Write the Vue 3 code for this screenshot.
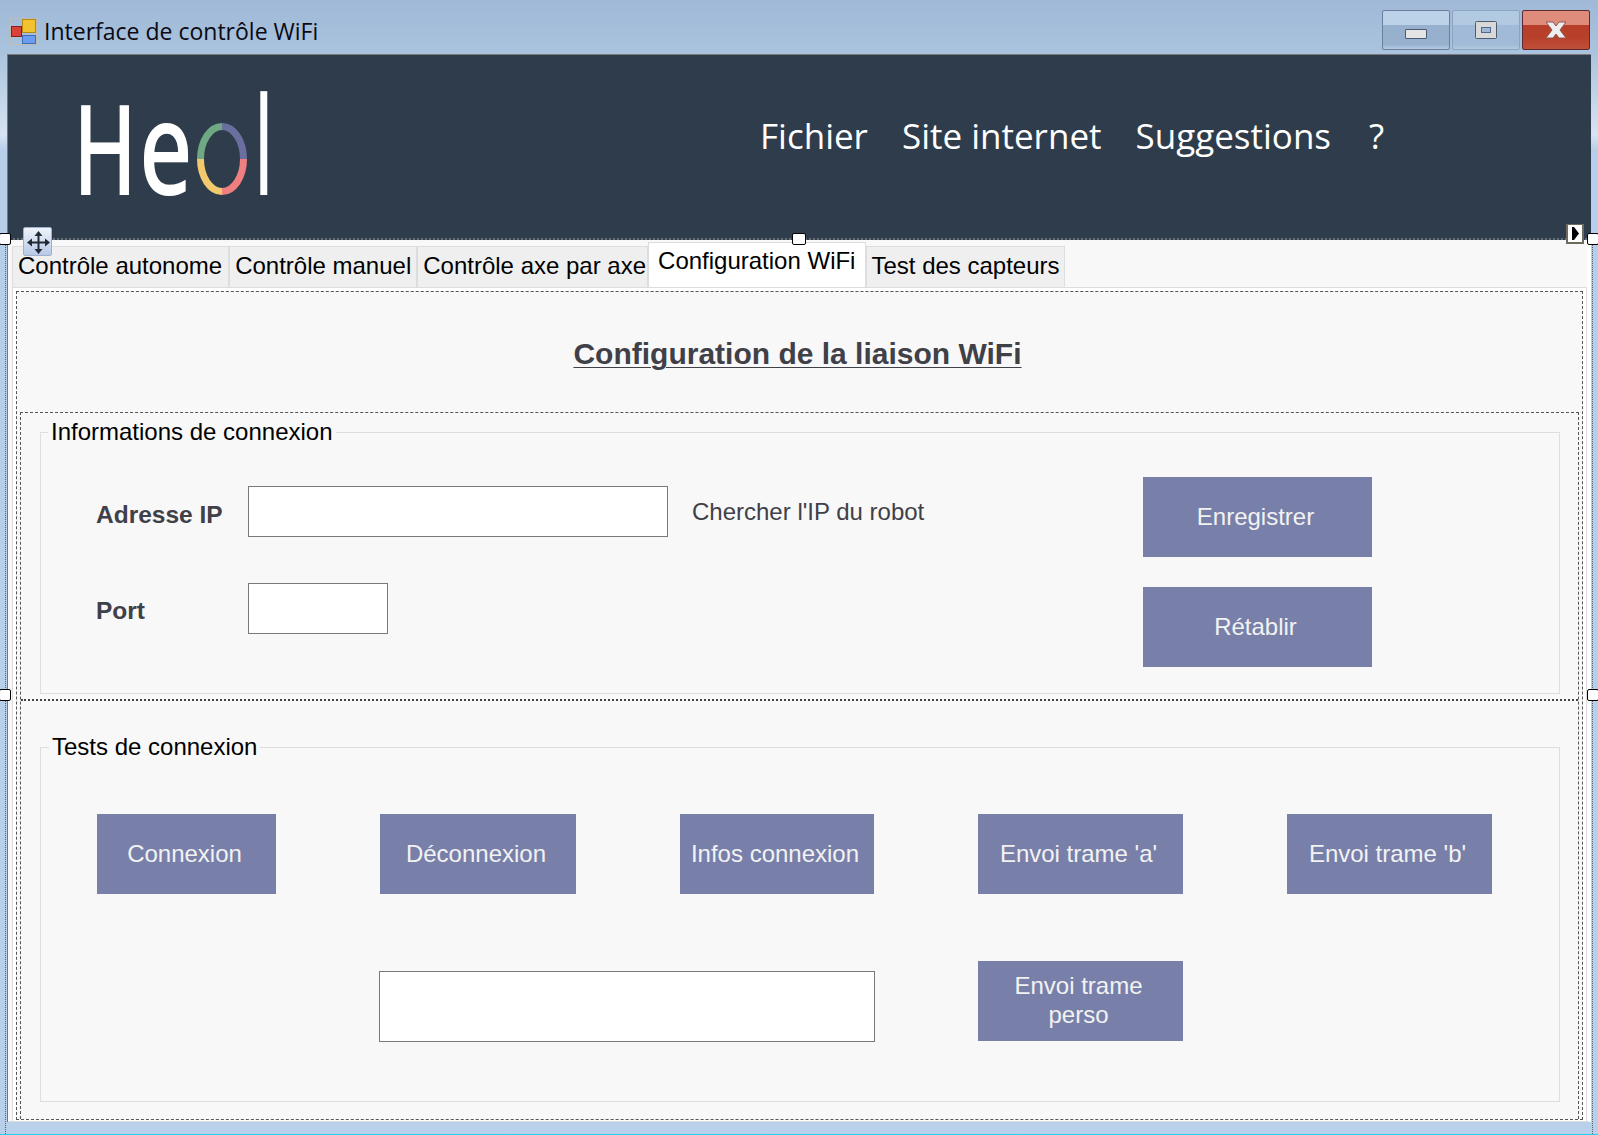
<template>
  <div class="window">
    <div class="titlebar">
      <svg class="app-icon" width="27" height="27" viewBox="0 0 27 27">
        <rect x="0.5" y="0.5" width="26" height="26" fill="none" stroke="#bdbdb5" />
        <rect x="1.5" y="8.5" width="10" height="10" fill="#d8403a" stroke="#8c1f1a" />
        <rect x="12.5" y="1.5" width="13" height="13" fill="#f3c230" stroke="#b58a10" />
        <rect x="12.5" y="17.5" width="13" height="8" fill="#6a9cf0" stroke="#3f6cb5" />
      </svg>
      <span class="window-title">Interface de contrôle WiFi</span>
      <div class="window-buttons">
        <div class="wbtn">
          <span class="min-glyph"></span>
        </div>
        <div class="wbtn wbtn-max">
          <svg width="22" height="18" viewBox="0 0 22 18">
            <rect x="0.5" y="0.5" width="21" height="17" rx="1" fill="#d8d8d8" stroke="#4f5b70" />
            <rect x="6.5" y="6.5" width="9" height="5" fill="#9fb7d5" stroke="#4f6a90" />
          </svg>
        </div>
        <div class="wbtn wbtn-close">
          <svg width="24" height="20" viewBox="0 0 24 20">
            <path d="M2 2h7l3 4 3-4h7l-6 8 6 8h-7l-3-4-3 4H2l6-8z" fill="#eeeeee" stroke="#8a5a55" stroke-width="1" />
          </svg>
        </div>
      </div>
    </div>

    <div class="frame">
      <header class="banner">
        <div class="logo">
          <span class="logo-letter letter-h">H</span>
          <span class="logo-letter letter-e">e</span>
          <svg class="logo-ring" width="50" height="72" viewBox="0 0 50 72" fill="none" stroke-width="7">
            <path d="M25 3.5A21.5 32.5 0 0 0 3.500 36" stroke="#6fa983" />
            <path d="M25 3.500A21.5 32.5 0 0 1 46.500 36" stroke="#6a6f9f" />
            <path d="M46.500 36A21.5 32.5 0 0 1 25 68.500" stroke="#f08080" />
            <path d="M25 68.500A21.5 32.5 0 0 1 3.500 36" stroke="#f2c96d" />
          </svg>
          <span class="logo-letter letter-l">l</span>
        </div>
        <nav class="menu">
          <span v-for="item in menu" :key="item">{{ item }}</span>
        </nav>
      </header>

      <div class="tabcontrol">
        <div class="tabs">
          <div
            v-for="tab in tabs"
            :key="tab"
            class="tab"
            :class="{ active: tab === activeTab }"
          >{{ tab }}</div>
        </div>

        <div class="tabpage">
          <div class="outer">
            <div class="title-panel">
              <h1>Configuration de la liaison WiFi</h1>
            </div>

            <div class="split">
              <div class="split-top">
                <fieldset class="group group-info">
                  <legend>Informations de connexion</legend>
                  <div class="conn-form">
                    <div class="fields">
                      <div class="field">
                        <label>Adresse IP</label>
                        <input class="input-ip" type="text" />
                        <span class="find-ip">Chercher l'IP du robot</span>
                      </div>
                      <div class="field">
                        <label>Port</label>
                        <input class="input-port" type="text" />
                      </div>
                    </div>
                    <div class="actions">
                      <button class="btn btn-wide">Enregistrer</button>
                      <button class="btn btn-wide">Rétablir</button>
                    </div>
                  </div>
                </fieldset>
              </div>

              <div class="split-bottom">
                <fieldset class="group group-tests">
                  <legend>Tests de connexion</legend>
                  <div class="test-row">
                    <button v-for="b in testButtons" :key="b.label" class="btn" :class="b.cls">{{ b.label }}</button>
                  </div>
                  <div class="custom-row">
                    <input class="input-frame" type="text" />
                    <button class="btn btn-frame">Envoi trame perso</button>
                  </div>
                </fieldset>
              </div>
            </div>
          </div>
        </div>
      </div>
    </div>

    <!-- designer overlays -->
    <div class="selection"></div>
    <span class="handle h-left"></span>
    <span class="handle h-mid"></span>
    <span class="handle h-right"></span>
    <span class="handle h-left2"></span>
    <span class="handle h-right2"></span>
    <div class="move-glyph">
      <svg width="29" height="29" viewBox="0 0 29 29">
        <path d="M14.500 3l4 5h-3v5.500h5.500v-3l5 4-5 4v-3h-5.500v5.500h3l-4 5-4-5h3v-5.500h-5.500v3l-5-4 5-4v3h5.500v-5.500h-3z" fill="#222a35" />
      </svg>
    </div>
    <div class="smart-tag">
      <svg width="9" height="13" viewBox="0 0 9 13"><path d="M1 0h2l5 6.500-5 6.500h-2z" fill="#000" /></svg>
    </div>
  </div>
</template>

<script setup>
import { ref } from 'vue';

const menu = ['Fichier', 'Site internet', 'Suggestions', '?'];
const tabs = ['Contrôle autonome', 'Contrôle manuel', 'Contrôle axe par axe', 'Configuration WiFi', 'Test des capteurs'];
const activeTab = ref('Configuration WiFi');

const testButtons = [
  { label: 'Connexion', cls: 'btn-connect' },
  { label: 'Déconnexion', cls: 'btn-disconnect' },
  { label: 'Infos connexion', cls: 'btn-infos' },
  { label: "Envoi trame 'a'", cls: 'btn-frame' },
  { label: "Envoi trame 'b'", cls: 'btn-frame' },
];
</script>

<style>
html,
body {
  margin: 0;
  background: #b8d0ea;
}
</style>

<style scoped>
.window {
  position: relative;
  width: 1598px;
  height: 1135px;
  overflow: hidden;
  box-sizing: border-box;
  border-bottom: 1px solid #1fd4ee;
  font-family: "Liberation Sans", Arial, sans-serif;
  background: linear-gradient(180deg, #9fb9d7 0, #a9c2dd 50px, #d6e4f2 135px, #b6cee9 150px, #b8d0ea 100%);
}

.titlebar {
  display: flex;
  align-items: center;
  height: 54px;
  padding: 2px 8px 0 10px;
  box-sizing: border-box;
}

.app-icon {
  margin-top: 6px;
}

.window-title {
  margin-left: 7px;
  font-family: "Open Sans", sans-serif;
  font-size: 23px;
  color: #0a0a14;
  margin-top: 6px;
}

.window-buttons {
  display: flex;
  gap: 2px;
  margin-left: auto;
  align-self: flex-start;
  margin-top: 8px;
}

.wbtn {
  display: flex;
  align-items: center;
  justify-content: center;
  width: 68px;
  height: 40px;
  box-sizing: border-box;
  border: 1px solid #6d7f9c;
  border-radius: 2px;
  background: linear-gradient(180deg, #bcd2e8 0, #bcd2e8 38%, #97b0ce 38%, #97b0ce 88%, #b4cbe2 100%);
}

.wbtn-max {
  border-color: #8ea3c0;
  background: linear-gradient(180deg, #b2c9e2 0, #b2c9e2 38%, #a1bad7 38%, #a1bad7 88%, #b2c9e2 100%);
}

.wbtn-close {
  border-color: #5c2a30;
  background: linear-gradient(180deg, #e08c7c 0, #e08c7c 38%, #b8402a 38%, #b8402a 70%, #c04f38 100%);
}

.min-glyph {
  display: block;
  width: 22px;
  height: 10px;
  margin-top: 8px;
  background: #e4e4e4;
  border: 1px solid #4a5a75;
  border-radius: 1px;
  box-sizing: border-box;
}

.frame {
  display: flex;
  flex-direction: column;
  margin: 0 7px 0 7px;
  height: 1068px;
  border-left: 1px solid #777;
  box-sizing: border-box;
}

.banner {
  display: flex;
  align-items: center;
  height: 186px;
  flex: none;
  background: #2f3c4b;
  border-top: 1px solid #7a7a7a;
  border-bottom: 2px dotted #6a7078;
  box-sizing: border-box;
}

.logo {
  display: flex;
  align-items: flex-end;
  width: 752px;
  height: 106px;
  padding-left: 71px;
  margin-top: -3px;
  box-sizing: border-box;
}

.logo-letter {
  display: block;
  font-family: "Noto Sans", sans-serif;
  font-size: 130px;
  font-weight: 500;
  line-height: 106px;
  color: #fff;
  transform-origin: left bottom;
  height: 106px;
}

.letter-h {
  width: 66px;
  margin-left: -6px;
  transform: scale(0.66, 0.97);
}

.letter-e {
  width: 58px;
  transform: scaleX(0.72);
}

.logo-ring {
  flex: none;
  margin: 0 8px 3px 0;
}

.letter-l {
  width: 10px;
  transform: scale(0.5, 1.05);
}

.menu {
  display: flex;
  gap: 34px;
  margin-top: -22px;
  font-family: "Open Sans", sans-serif;
  font-weight: 400;
  font-size: 35px;
  color: #fff;
}

.menu span:last-child {
  margin-left: 4px;
}

.tabcontrol {
  flex: 1;
  display: flex;
  flex-direction: column;
  background: #f8f8f8;
  border-right: 4px solid #fff;
  border-bottom: 1px solid #ddd;
}

.tabs {
  display: flex;
  align-items: flex-end;
  height: 47px;
  padding-left: 4px;
  flex: none;
}

.tab {
  height: 41px;
  box-sizing: border-box;
  padding: 0 1px 3px 5px;
  display: flex;
  align-items: center;
  justify-content: center;
  font-size: 24px;
  color: #000;
  background: #efefef;
  border: 1px solid #ddd;
  border-bottom: 0;
}

.tab:last-child {
  padding: 0 4px 3px;
}

.tab:nth-child(1) {
  padding: 0 6px 3px 5px;
}

.tab:nth-child(2) {
  padding: 0 5px 3px;
}

.tab.active {
  height: 45px;
  padding: 0 10px 8px 9px;
  background: #fff;
}

.tabpage {
  flex: 1;
  background: #fff;
  border: 1px solid #ddd;
  border-bottom: 0;
  margin-left: 4px;
  padding: 3px 3px 1px 3px;
  min-height: 0;
  display: flex;
}

.outer {
  flex: 1;
  display: flex;
  flex-direction: column;
  border: 1px dashed #555;
  background: #f8f8f8;
}

.title-panel {
  display: flex;
  align-items: center;
  justify-content: center;
  height: 120px;
  flex: none;
}

h1 {
  margin: 4px 4px 0 0;
  font-size: 30px;
  font-weight: 700;
  color: #404048;
  text-decoration: underline;
  text-decoration-thickness: 1px;
  text-underline-offset: 3px;
}

.split {
  flex: 1;
  display: flex;
  flex-direction: column;
  margin: 0 3px;
  border: 1px dashed #555;
  border-bottom: 0;
}

.split-top {
  height: 288px;
  flex: none;
  box-sizing: border-box;
  border-bottom: 2px dotted #444;
  padding: 0 18px 0 19px;
}

.split-bottom {
  flex: 1;
  padding: 0 18px 0 19px;
}

.group {
  margin: 0;
  padding: 0;
  border: 1px solid #ddd;
  box-sizing: border-box;
  min-width: 0;
}

.group legend {
  margin-left: 7px;
  padding: 0 3px;
  font-size: 24px;
  line-height: 26px;
  color: #000;
}

.group-tests legend {
  margin-left: 8px;
}

.group-info {
  height: 275px;
  margin-top: 6px;
  padding-top: 32px;
}

.conn-form {
  display: flex;
  padding-left: 55px;
}

.fields {
  display: flex;
  flex-direction: column;
  gap: 46px;
  padding-top: 9px;
}

.field {
  display: flex;
  align-items: center;
  height: 51px;
}

.field label {
  width: 152px;
  margin-top: 5px;
  font-size: 24.5px;
  font-weight: 700;
  color: #404048;
}

.field:first-child label {
  margin-top: 7px;
}

input {
  box-sizing: border-box;
  margin: 0;
  padding: 0;
  border: 1px solid #7a7a7a;
  background: #fff;
  outline: none;
}

.input-ip {
  width: 420px;
  height: 51px;
}

.input-port {
  width: 140px;
  height: 51px;
}

.find-ip {
  margin-left: 24px;
  font-size: 24px;
  color: #404048;
}

.actions {
  display: flex;
  flex-direction: column;
  gap: 30px;
  margin-left: auto;
  margin-right: 187px;
}

.btn {
  box-sizing: border-box;
  height: 80px;
  padding: 0 4px 2px 0;
  border: 0;
  background: #7880aa;
  color: #f2f2f2;
  font-family: "Liberation Sans", Arial, sans-serif;
  font-size: 24px;
  line-height: 29px;
}

.btn-wide {
  width: 229px;
}

.group-tests {
  height: 368px;
  margin-top: 33px;
  padding-top: 54px;
}

.test-row {
  display: flex;
  gap: 104px;
  padding-left: 56px;
}

.btn-connect {
  width: 179px;
}

.btn-disconnect {
  width: 196px;
}

.btn-infos {
  width: 194px;
}

.btn-frame {
  width: 205px;
  padding: 0 24px 2px 20px;
}

.custom-row {
  display: flex;
  align-items: flex-start;
  gap: 103px;
  margin: 67px 0 0 338px;
}

.input-frame {
  width: 496px;
  height: 71px;
  margin-top: 10px;
}

.selection {
  position: absolute;
  left: 5px;
  right: 5px;
  top: 240px;
  bottom: 0;
  border-left: 1px dotted #55606e;
  border-right: 1px dotted #55606e;
  pointer-events: none;
}

.handle {
  position: absolute;
  width: 12px;
  height: 12px;
  box-sizing: border-box;
  background: #fff;
  border: 1px solid #000;
  border-radius: 2px;
}

.h-left {
  left: -1px;
  top: 233px;
}

.h-mid {
  left: 792px;
  top: 233px;
  width: 14px;
}

.h-right {
  left: 1587px;
  top: 233px;
}

.h-left2 {
  left: -1px;
  top: 689px;
}

.h-right2 {
  left: 1587px;
  top: 689px;
}

.move-glyph {
  position: absolute;
  left: 23px;
  top: 227px;
  width: 29px;
  height: 29px;
  box-sizing: border-box;
  border: 1px solid #9fb0cc;
  border-radius: 2px;
  background: linear-gradient(180deg, #eef3fb, #b7c9e6);
}

.smart-tag {
  position: absolute;
  left: 1566px;
  top: 224px;
  width: 18px;
  height: 20px;
  box-sizing: border-box;
  display: flex;
  align-items: center;
  justify-content: center;
  background: #fff;
  border: 2px solid #6e6a60;
  border-width: 1px 2px 2px;
}
</style>
